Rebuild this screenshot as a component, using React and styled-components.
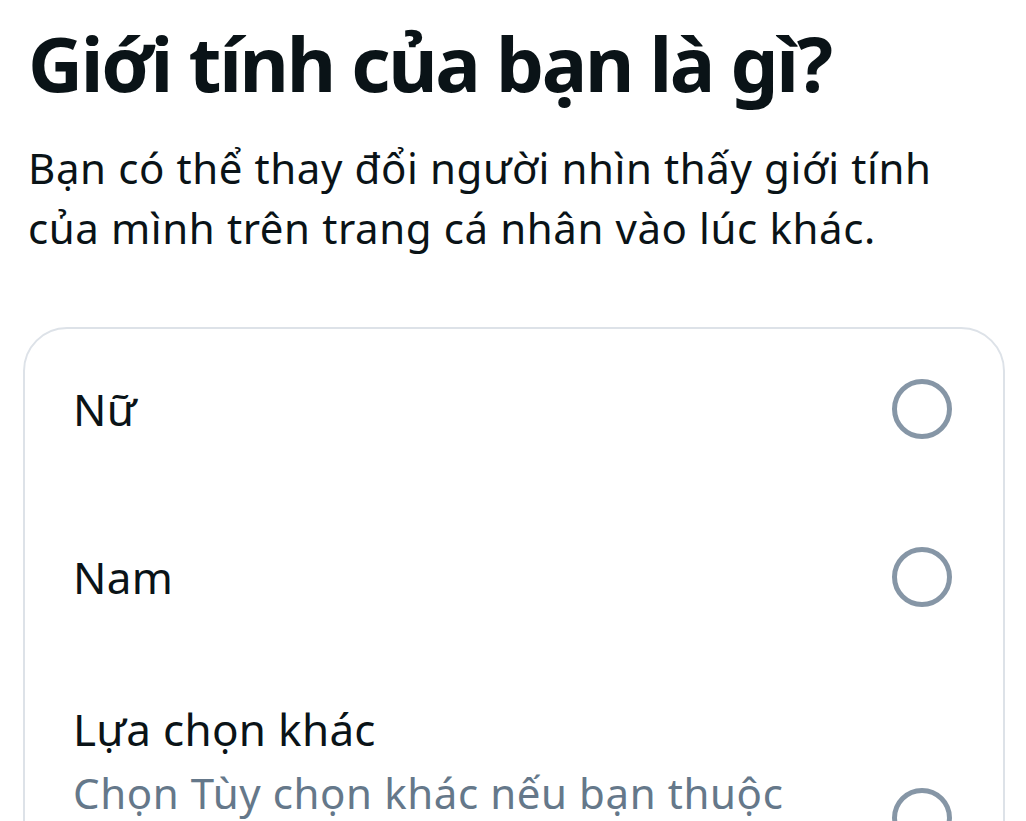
import React from 'react';
import styled, { createGlobalStyle } from 'styled-components';

const colors = {
  text: '#0a1317',
  muted: '#65788a',
  border: '#dde2e8',
  radio: '#8696a6',
};

const GlobalStyle = createGlobalStyle`
  html, body {
    margin: 0;
    padding: 0;
    background: #ffffff;
    overflow: hidden;
  }
  body {
    font-family: "Noto Sans", "Open Sans", sans-serif;
    color: ${colors.text};
  }
`;

const Page = styled.div`
  padding: 15px 21px 0 23px;
`;

const Title = styled.h1`
  margin: 0 0 0 5px;
  font-size: 76px;
  line-height: 96px;
  font-weight: 700;
  letter-spacing: -2.3px;
`;

const Subtitle = styled.p`
  margin: 27px 60px 0 5px;
  font-size: 42px;
  line-height: 60px;
  font-weight: 400;
  letter-spacing: 0.6px;
`;

const Card = styled.div`
  margin-top: 69px;
  border: 2px solid ${colors.border};
  border-radius: 44px;
  display: flex;
  flex-direction: column;
  gap: 8px;
`;

const Row = styled.label`
  display: flex;
  align-items: center;
  gap: 40px;
  min-height: 160px;
  box-sizing: border-box;
  padding: 32px 51px 32px 48px;
`;

const TextBlock = styled.div`
  flex: 1;
  display: flex;
  flex-direction: column;
`;

const Label = styled.span`
  font-size: 44px;
  line-height: 64px;
  letter-spacing: 0.3px;
`;

const Description = styled.span`
  margin-top: 3px;
  font-size: 42px;
  line-height: 58px;
  letter-spacing: 0.6px;
  color: ${colors.muted};
`;

const Radio = styled.span`
  flex: none;
  width: 60px;
  height: 60px;
  box-sizing: border-box;
  border-radius: 50%;
  border: 5px solid ${colors.radio};
`;

const options = [
  { label: 'Nữ' },
  { label: 'Nam' },
  {
    label: 'Lựa chọn khác',
    description:
      'Chọn Tùy chọn khác nếu bạn thuộc giới tính khác hoặc không muốn tiết lộ.',
  },
];

export default function App() {
  return (
    <Page>
      <GlobalStyle />
      <Title>Giới tính của bạn là gì?</Title>
      <Subtitle>
        Bạn có thể thay đổi người nhìn thấy giới tính của mình trên trang cá
        nhân vào lúc khác.
      </Subtitle>
      <Card>
        {options.map((o) => (
          <Row key={o.label}>
            <TextBlock>
              <Label>{o.label}</Label>
              {o.description && <Description>{o.description}</Description>}
            </TextBlock>
            <Radio />
          </Row>
        ))}
      </Card>
    </Page>
  );
}
